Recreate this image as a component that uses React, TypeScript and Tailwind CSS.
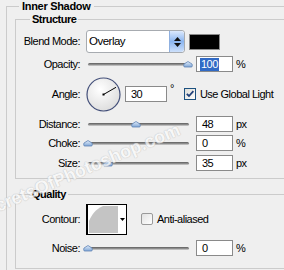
import React from 'react'

function Field({ children, w = 'w-[37px]', selected = false }: { children: React.ReactNode; w?: string; selected?: boolean }) {
    return (
        <div className={`${w} h-[16px] shrink-0 border border-[#8a8a8a] bg-white flex items-center pl-[3px] leading-none`}>
            {selected ? <span className="bg-[#316ac5] text-white px-[1px] py-[1px]">{children}</span> : <span className="pl-[2px]">{children}</span>}
        </div>
    )
}

function Slider({ pos }: { pos: number }) {
    return (
        <div className="relative ml-[8px] w-[101px] h-[16px] shrink-0 flex items-center">
            <div className="w-full h-[3px] rounded-full bg-gradient-to-b from-[#5e5e5e] via-[#8c8c8c] to-[#d6d6d6]" />
            <svg className="absolute top-[5px]" style={{ left: pos - 5 }} width="10" height="7" viewBox="0 0 10 7">
                <defs>
                    <linearGradient id={`th${pos}`} x1="0" y1="0" x2="0" y2="1">
                        <stop offset="0" stopColor="#e4eefb" />
                        <stop offset="1" stopColor="#7fa6d6" />
                    </linearGradient>
                </defs>
                <path d="M5 0.5 L9 3 Q9.8 4.2 8.8 6 L1.2 6 Q0.2 4.2 1 3 Z" fill={`url(#th${pos})`} stroke="#5f84b5" strokeWidth="0.8" />
            </svg>
        </div>
    )
}

function Label({ children }: { children: React.ReactNode }) {
    return <div className="w-[64px] shrink-0 text-right">{children}</div>
}

function SliderRow({ label, value, unit, pos, className = '', selected = false }: { label: string; value: string; unit: string; pos: number; className?: string; selected?: boolean }) {
    return (
        <div className={`flex items-center h-[16px] ${className}`}>
            <Label>{label}</Label>
            <Slider pos={pos} />
            <div className="ml-[7px]">
                <Field selected={selected}>{value}</Field>
            </div>
            <span className="ml-[3px]">{unit}</span>
        </div>
    )
}

function Legend({ children }: { children: React.ReactNode }) {
    return <legend className="ml-[14px] px-[2px] leading-[13px] font-bold">{children}</legend>
}

export default function App() {
    return (
        <div className="relative w-[284px] h-[270px] overflow-hidden bg-[#efefef] pl-[6px] text-[11px] tracking-[-0.5px] text-black font-['Liberation_Sans',Arial,sans-serif]">
            <fieldset className="w-[300px] h-[300px] border border-[#cbcbcb] pl-[8px]">
                <legend className="ml-[4px] px-[3px] leading-[13px] font-bold tracking-[-0.3px]">Inner Shadow</legend>

                {/* Structure */}
                <fieldset className="border border-[#cbcbcb] pt-[4px] pb-[7px]">
                    <Legend>Structure</Legend>

                    <div className="flex items-center h-[23px]">
                        <Label>Blend Mode:</Label>
                        <div className="ml-[6px] w-[99px] h-[23px] shrink-0 flex rounded-[3px] border border-[#a7abb0] bg-white overflow-hidden">
                            <div className="flex-1 flex items-center pl-[2px] text-[11.5px]">Overlay</div>
                            <div className="w-[15px] flex flex-col items-center justify-center gap-[2px] rounded-r-[3px] border-l border-[#8fb0e0] bg-gradient-to-b from-[#dce9fc] via-[#8cb6f0] to-[#cde0fb]">
                                <svg width="7" height="4" viewBox="0 0 7 4"><path d="M3.5 0 L7 4 L0 4 Z" fill="#111" /></svg>
                                <svg width="7" height="4" viewBox="0 0 7 4"><path d="M0 0 L7 0 L3.5 4 Z" fill="#111" /></svg>
                            </div>
                        </div>
                        <div className="ml-[4px] w-[31px] h-[16px] border border-[#8a8a8a] bg-black" />
                    </div>

                    <SliderRow label="Opacity:" value="100" unit="%" pos={100} className="mt-[3px]" selected />

                    <div className="flex items-center h-[34px] mt-[5px]">
                        <Label>Angle:</Label>
                        <svg className="ml-[6px] shrink-0" width="35" height="35" viewBox="0 0 35 35">
                            <defs>
                                <radialGradient id="dial" cx="0.4" cy="0.35" r="0.7">
                                    <stop offset="0" stopColor="#ffffff" />
                                    <stop offset="1" stopColor="#dcdcdc" />
                                </radialGradient>
                            </defs>
                            <circle cx="17.5" cy="17.5" r="16.5" fill="url(#dial)" stroke="#44507a" strokeWidth="1.2" />
                            <line x1="17.5" y1="17.5" x2="30" y2="10.3" stroke="#000" strokeWidth="1" />
                            <rect x="16.5" y="16.5" width="2" height="2" fill="#000" />
                        </svg>
                        <div className="ml-[4px]">
                            <Field w="w-[42px]">30</Field>
                        </div>
                        <span className="ml-[3px] self-start mt-[6px] leading-none">°</span>
                        <svg className="ml-[10px] shrink-0" width="12" height="12" viewBox="0 0 12 12">
                            <defs>
                                <linearGradient id="cb" x1="0" y1="0" x2="1" y2="1">
                                    <stop offset="0" stopColor="#dcdcd6" />
                                    <stop offset="1" stopColor="#ffffff" />
                                </linearGradient>
                            </defs>
                            <rect x="0.5" y="0.5" width="11" height="11" fill="url(#cb)" stroke="#1c5180" />
                            <path d="M2.8 5.8 L5 8 L9.4 3.2" fill="none" stroke="#21407a" strokeWidth="1.8" />
                        </svg>
                        <span className="ml-[4px]">Use Global Light</span>
                    </div>

                    <SliderRow label="Distance:" value="48" unit="px" pos={48} className="mt-[5px]" />
                    <SliderRow label="Choke:" value="0" unit="%" pos={0} className="mt-[3px]" />
                    <SliderRow label="Size:" value="35" unit="px" pos={20} className="mt-[4px]" />
                </fieldset>

                {/* Quality */}
                <fieldset className="mt-[9px] border border-[#cbcbcb] pt-[3px] pb-[12px]">
                    <Legend>Quality</Legend>

                    <div className="flex items-center h-[30px]">
                        <Label>Contour:</Label>
                        <div className="ml-[6px] w-[41px] h-[31px] shrink-0 flex border border-black border-l-2 bg-white">
                            <svg width="29" height="27" viewBox="0 0 29 27" className="mt-[1px] ml-[1px]">
                                <path d="M0 27 L0 15 C3 8 7 3 14 0 L29 0 L29 27 Z" fill="#c4c4c4" />
                            </svg>
                            <div className="flex-1 flex items-center justify-center">
                                <svg width="5" height="3" viewBox="0 0 5 3"><path d="M0 0 L5 0 L2.5 3 Z" fill="#000" /></svg>
                            </div>
                        </div>
                        <div className="ml-[14px] w-[12px] h-[12px] shrink-0 rounded-[2px] border border-[#9a9a9a] bg-gradient-to-br from-[#e2e2e2] to-white" />
                        <span className="ml-[4px]">Anti-aliased</span>
                    </div>

                    <SliderRow label="Noise:" value="0" unit="%" pos={0} className="mt-[6px]" />
                </fieldset>
            </fieldset>

            {/* watermark */}
            <div className="absolute left-[-71px] top-[224px] origin-top-left -rotate-[23deg] whitespace-nowrap text-[18px] leading-[20px] font-bold tracking-normal text-[#fafafa] opacity-75 [text-shadow:0_0_1px_#b8b8b8,0_0_1px_#b8b8b8]">
                www.SecretsOfPhotoshop.com
            </div>
        </div>
    )
}
